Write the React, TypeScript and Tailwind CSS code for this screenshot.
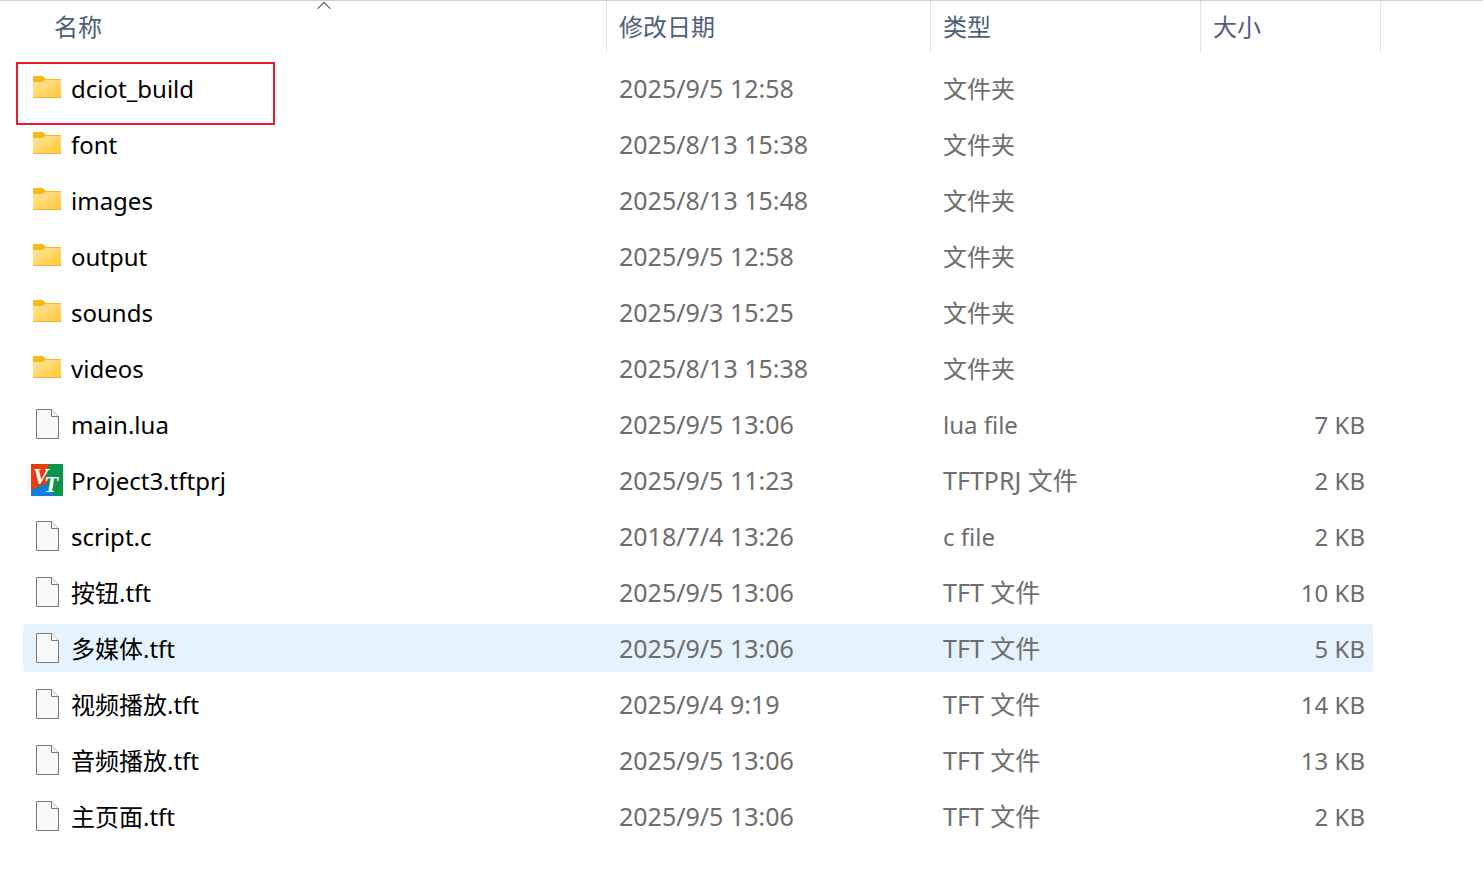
type FileKind = "folder" | "file" | "project";

interface FileItem {
  name: string;
  modified: string;
  type: string;
  size?: string;
  kind: FileKind;
}

const files: FileItem[] = [
  { name: "dciot_build", modified: "2025/9/5 12:58", type: "文件夹", kind: "folder" },
  { name: "font", modified: "2025/8/13 15:38", type: "文件夹", kind: "folder" },
  { name: "images", modified: "2025/8/13 15:48", type: "文件夹", kind: "folder" },
  { name: "output", modified: "2025/9/5 12:58", type: "文件夹", kind: "folder" },
  { name: "sounds", modified: "2025/9/3 15:25", type: "文件夹", kind: "folder" },
  { name: "videos", modified: "2025/8/13 15:38", type: "文件夹", kind: "folder" },
  { name: "main.lua", modified: "2025/9/5 13:06", type: "lua file", size: "7 KB", kind: "file" },
  { name: "Project3.tftprj", modified: "2025/9/5 11:23", type: "TFTPRJ 文件", size: "2 KB", kind: "project" },
  { name: "script.c", modified: "2018/7/4 13:26", type: "c file", size: "2 KB", kind: "file" },
  { name: "按钮.tft", modified: "2025/9/5 13:06", type: "TFT 文件", size: "10 KB", kind: "file" },
  { name: "多媒体.tft", modified: "2025/9/5 13:06", type: "TFT 文件", size: "5 KB", kind: "file" },
  { name: "视频播放.tft", modified: "2025/9/4 9:19", type: "TFT 文件", size: "14 KB", kind: "file" },
  { name: "音频播放.tft", modified: "2025/9/5 13:06", type: "TFT 文件", size: "13 KB", kind: "file" },
  { name: "主页面.tft", modified: "2025/9/5 13:06", type: "TFT 文件", size: "2 KB", kind: "file" },
];

const HOVERED = "多媒体.tft";
const MARKED = "dciot_build";

const FolderIcon = () => (
  <svg viewBox="0 0 32 32" className="size-8 shrink-0" aria-hidden="true">
    <defs>
      <linearGradient id="folder" x1="0" y1="0" x2="1" y2="1">
        <stop offset="0" stopColor="#ffe69c" />
        <stop offset="1" stopColor="#ffc937" />
      </linearGradient>
    </defs>
    <path d="M2 4.8Q2 4 2.8 4H11.2Q12.4 4 13.2 5L14.6 7H29.2Q30 7 30 7.8V15H2Z" fill="#f9b917" />
    <path d="M2 10H11.8Q12.8 10 13.4 9.3L14 8.6Q14.5 8 15.4 8H30V25.2Q30 26 29.2 26H2.8Q2 26 2 25.2Z" fill="url(#folder)" />
    <path d="M2 25H30V25.2Q30 26 29.2 26H2.8Q2 26 2 25.2Z" fill="#eeb139" />
  </svg>
);

const BlankFileIcon = () => (
  <svg viewBox="0 0 32 32" className="size-8 shrink-0" aria-hidden="true">
    <path d="M5.5 1.5H20.5L27.5 8.5V30.5H5.5Z" fill="#fafafa" stroke="#797774" />
    <path d="M20.5 1.5V8.5H27.5" fill="#fff" stroke="#797774" />
  </svg>
);

const ProjectIcon = () => (
  <svg viewBox="0 0 32 32" className="size-8 shrink-0" aria-hidden="true">
    <rect width="32" height="32" fill="#0a934b" />
    <path d="M0 0H18Q13 9 17 20L12 24L0 28Z" fill="#e83e0b" />
    <path d="M0 27Q6 22 16 20Q18 26 25 32H0Z" fill="#0d7fdc" />
    <text
      x="2"
      y="20"
      fill="#fff"
      fontFamily="'Liberation Serif', serif"
      fontSize="23"
      fontStyle="italic"
      fontWeight="700"
    >
      V<tspan x="13" y="28">T</tspan>
    </text>
  </svg>
);

const icons = {
  folder: FolderIcon,
  file: BlankFileIcon,
  project: ProjectIcon,
};

const SortIcon = () => (
  <svg viewBox="0 0 14 9" className="absolute top-0 left-1/2 h-[9px] w-3.5 -translate-x-1/2" aria-hidden="true">
    <path d="M0.8 7.6L7 1.4L13.2 7.6" fill="none" stroke="#5c5c5c" strokeWidth="1.2" />
  </svg>
);

const HeaderCell = ({ label, sorted }: { label: string; sorted?: boolean }) => (
  <th
    scope="col"
    aria-sort={sorted ? "ascending" : undefined}
    className={`h-[59px] p-0 align-top font-normal ${sorted ? "pl-[42px]" : ""}`}
  >
    <button
      type="button"
      className="relative flex h-[51px] w-full items-center border-r border-[#e2e2e2] px-3 pt-px text-left text-[#4c607a]"
    >
      {label}
      {sorted && <SortIcon />}
    </button>
  </th>
);

const FileRow = ({ file }: { file: FileItem }) => {
  const Icon = icons[file.kind];
  const bg = file.name === HOVERED ? "bg-[#e5f3ff]" : "";
  const typeSize = file.type.startsWith("TFT") ? "text-[25px]" : "text-2xl";

  return (
    <tr className="text-[#6d6d6d]">
      <td className="relative py-1 pr-0 pl-[23px]">
        <div className={`flex h-12 items-center gap-2 rounded-l-xs pl-2 text-black ${bg}`}>
          <Icon />
          <span className="pt-0.5">{file.name}</span>
        </div>
        {file.name === MARKED && (
          <span className="absolute top-0.5 left-4 h-[63px] w-[259px] border-2 border-[#ed1c24]" />
        )}
      </td>
      <td className="px-0 py-1">
        <div className={`flex h-12 items-center px-3 pt-0.5 text-[25px] ${bg}`}>{file.modified}</div>
      </td>
      <td className="px-0 py-1">
        <div className={`flex h-12 items-center px-3 pt-0.5 ${typeSize} ${bg}`}>{file.type}</div>
      </td>
      <td className="py-1 pr-2 pl-0">
        <div className={`flex h-12 items-center justify-end rounded-r-xs pt-0.5 pr-2 ${bg}`}>{file.size}</div>
      </td>
      <td className="p-0" />
    </tr>
  );
};

const App = () => {
  return (
    <main className="min-h-screen border-t border-[#d2d2d2] bg-white font-['Noto_Sans','Noto_Sans_CJK_SC',sans-serif] text-2xl">
      <table className="w-full table-fixed border-collapse">
        <colgroup>
          <col />
          <col className="w-[324px]" />
          <col className="w-[270px]" />
          <col className="w-[180px]" />
          <col className="w-[102px]" />
        </colgroup>
        <thead>
          <tr>
            <HeaderCell label="名称" sorted />
            <HeaderCell label="修改日期" />
            <HeaderCell label="类型" />
            <HeaderCell label="大小" />
            <td className="p-0" />
          </tr>
        </thead>
        <tbody>
          {files.map((file) => (
            <FileRow key={file.name} file={file} />
          ))}
        </tbody>
      </table>
    </main>
  );
};

export default App;
